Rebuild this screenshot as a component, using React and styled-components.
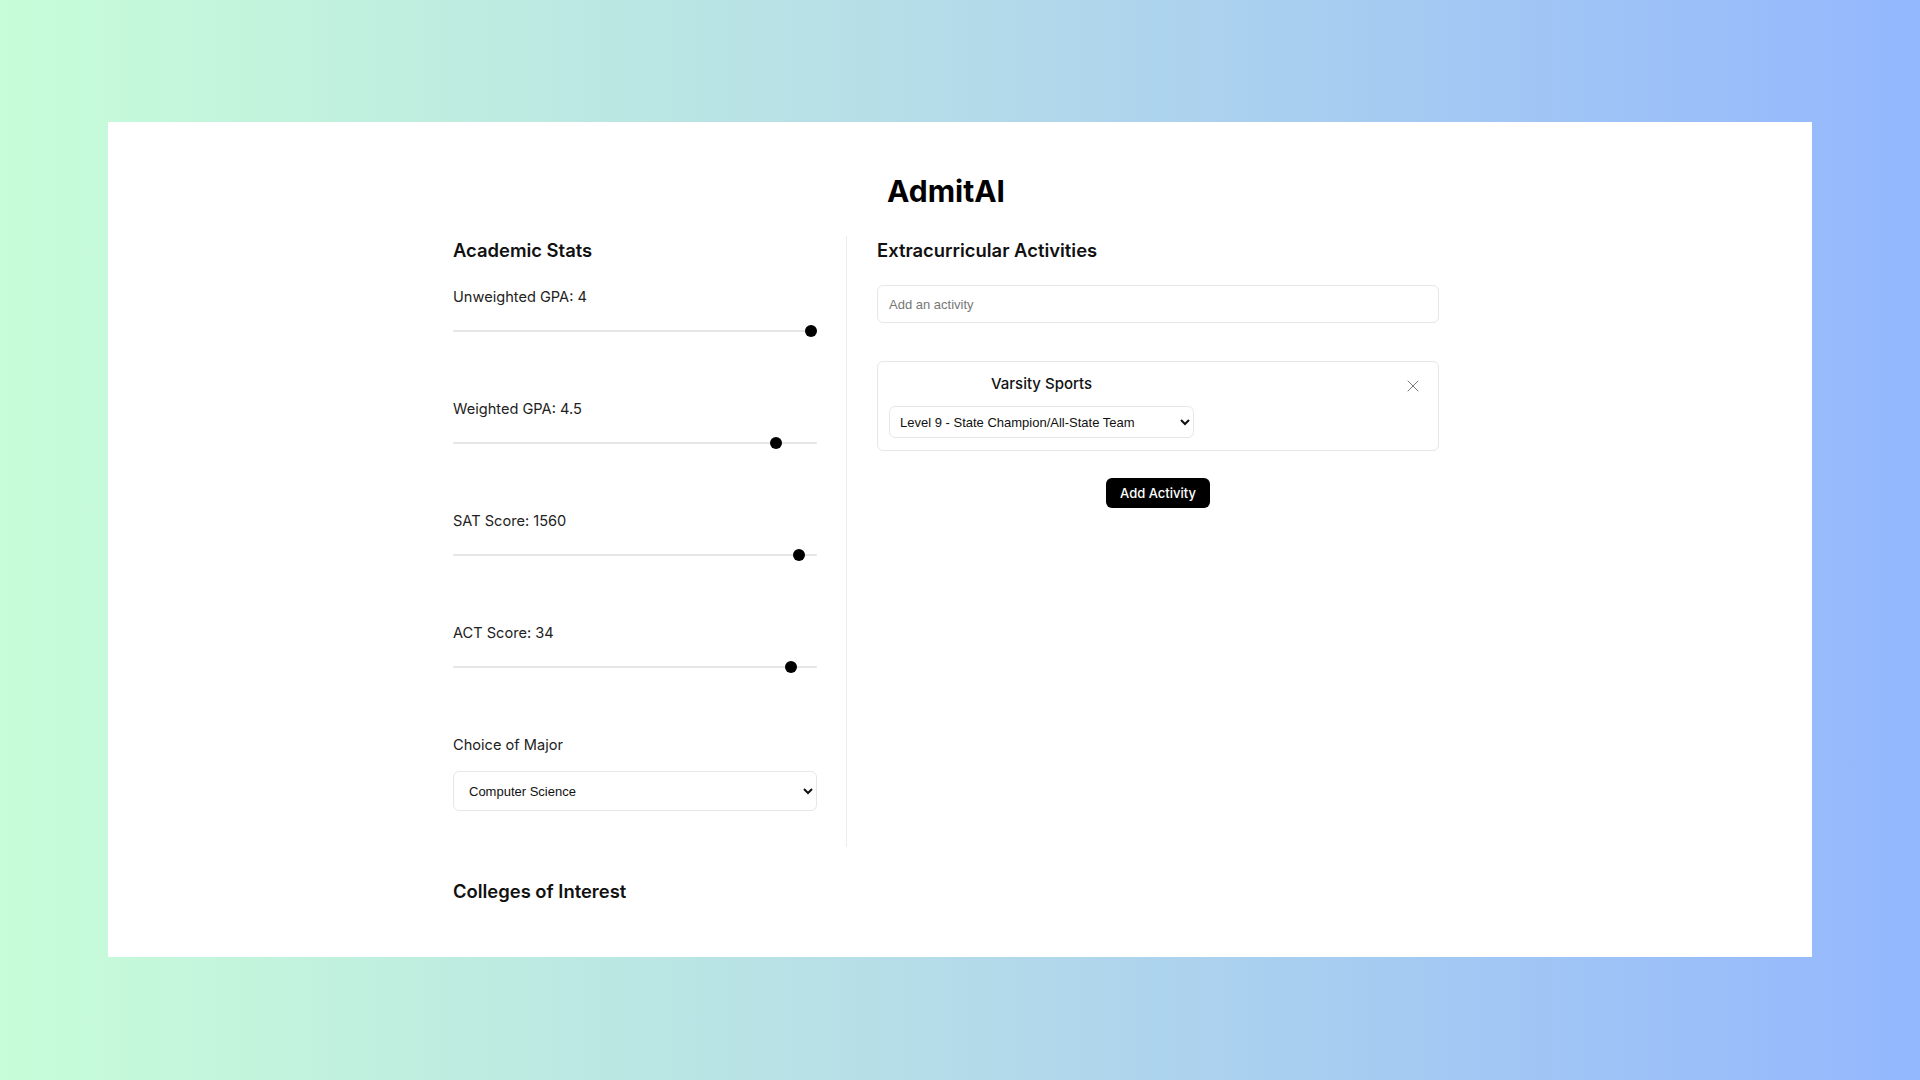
import { useState } from 'react'
import styled, { createGlobalStyle } from 'styled-components'
import { X } from 'lucide-react'

const GlobalStyle = createGlobalStyle`
  html, body {
    margin: 0;
    padding: 0;
  }
  body {
    font-family: Inter, "Noto Sans", sans-serif;
    color: #111;
  }
  * {
    box-sizing: border-box;
  }
`

const Page = styled.div`
  min-height: 100vh;
  padding: 122px 108px 123px;
  display: flex;
  background: linear-gradient(to right, #c7fdd8, #b4dbe9 50%, #93b7fd);
`

const Card = styled.main`
  flex: 1;
  background: #fff;
  padding: 49px 28px 0 0;
  display: flex;
  flex-direction: column;
  align-items: center;
`

const Inner = styled.div`
  width: 986px;
  display: flex;
  flex-direction: column;
`

const Title = styled.h1`
  margin: 0;
  font-size: 30px;
  line-height: 40px;
  font-weight: 700;
  text-align: center;
  color: #000;
`

const Columns = styled.div`
  display: flex;
  margin-top: 25px;
`

const LeftCol = styled.section`
  width: 394px;
  padding: 0 29px 36px 0;
  border-right: 1px solid #ededed;
`

const RightCol = styled.section`
  flex: 1;
  padding-left: 30px;
  display: flex;
  flex-direction: column;
`

const Heading = styled.h2`
  margin: 0 0 ${p => p.$gap || 0}px;
  padding-top: 1px;
  font-size: 18.4px;
  line-height: 27px;
  font-weight: 600;
  color: #111;
`

const Field = styled.div`
  margin-bottom: ${p => p.$last ? 0 : 59}px;
`

const Label = styled.label`
  display: block;
  font-size: 14.6px;
  line-height: 20px;
  padding-top: 1px;
  color: #222;
  margin-bottom: 16px;
`

const Range = styled.input`
  display: block;
  width: 100%;
  height: 16px;
  margin: 0;
  background: transparent;
  -webkit-appearance: none;
  appearance: none;

  &::-webkit-slider-runnable-track {
    height: 2px;
    background: #e6e6e6;
    border-radius: 1px;
  }
  &::-webkit-slider-thumb {
    -webkit-appearance: none;
    width: 12px;
    height: 12px;
    margin-top: -5px;
    border-radius: 50%;
    background: #000;
    border: none;
  }
`

const Select = styled.select`
  display: block;
  width: ${p => p.$width || '100%'};
  height: ${p => p.$height || 40}px;
  padding: 0 8px 0 ${p => p.$padLeft ?? 11}px;
  font-family: "Liberation Sans", Arial, sans-serif;
  font-size: 13px;
  color: #111;
  background: #fff;
  border: 1px solid #e7e7e7;
  border-radius: 6px;
`

const TextInput = styled.input`
  height: 38px;
  padding: 0 11px;
  font-family: "Liberation Sans", Arial, sans-serif;
  font-size: 13px;
  border: 1px solid #e7e7e7;
  border-radius: 6px;
  margin: 21px 0 38px;

  &::placeholder {
    color: #777;
  }
`

const ActivityCard = styled.div`
  display: flex;
  justify-content: space-between;
  align-items: flex-start;
  padding: 12px 13px 12px 11px;
  border: 1px solid #e7e7e7;
  border-radius: 6px;
`

const ActivityMain = styled.div`
  display: flex;
  flex-direction: column;
  align-items: center;
  gap: 12px;
`

const ActivityName = styled.div`
  font-size: 15px;
  line-height: 20px;
  font-weight: 500;
  color: #111;
`

const CloseBtn = styled.button`
  display: flex;
  align-items: center;
  justify-content: center;
  width: 24px;
  height: 24px;
  padding: 0;
  border: none;
  background: none;
  color: #7a7a7a;
  cursor: pointer;
`

const AddButton = styled.button`
  align-self: center;
  margin-top: 27px;
  height: 30px;
  padding: 0 14px;
  font-family: Inter, sans-serif;
  font-size: 13px;
  font-weight: 500;
  color: #fff;
  background: #000;
  border: none;
  border-radius: 6px;
  cursor: pointer;
`

const Colleges = styled.section`
  margin-top: 30px;
`

const sliders = [
  { key: 'ugpa', label: 'Unweighted GPA', min: 0, max: 4, step: 0.1, value: 4 },
  { key: 'wgpa', label: 'Weighted GPA', min: 0, max: 5, step: 0.1, value: 4.5 },
  { key: 'sat', label: 'SAT Score', min: 400, max: 1600, step: 10, value: 1560 },
  { key: 'act', label: 'ACT Score', min: 1, max: 36, step: 1, value: 34 },
]

const majors = ['Computer Science', 'Engineering', 'Biology', 'Economics', 'Mathematics']

const levels = [
  'Level 10 - National/International Recognition',
  'Level 9 - State Champion/All-State Team',
  'Level 8 - Regional Recognition',
  'Level 7 - Team Captain',
]

export default function App() {
  const [stats, setStats] = useState(
    Object.fromEntries(sliders.map(s => [s.key, s.value]))
  )
  const [major, setMajor] = useState('Computer Science')
  const [activity, setActivity] = useState('')
  const [level, setLevel] = useState(levels[1])

  return (
    <>
      <GlobalStyle />
      <Page>
        <Card>
          <Inner>
            <Title>AdmitAI</Title>
            <Columns>
              <LeftCol>
                <Heading $gap={22}>Academic Stats</Heading>
                {sliders.map(s => (
                  <Field key={s.key}>
                    <Label>{s.label}: {stats[s.key]}</Label>
                    <Range
                      type="range"
                      min={s.min}
                      max={s.max}
                      step={s.step}
                      value={stats[s.key]}
                      onChange={e => setStats({ ...stats, [s.key]: Number(e.target.value) })}
                    />
                  </Field>
                ))}
                <Field $last>
                  <Label>Choice of Major</Label>
                  <Select value={major} onChange={e => setMajor(e.target.value)}>
                    {majors.map(m => <option key={m}>{m}</option>)}
                  </Select>
                </Field>
              </LeftCol>
              <RightCol>
                <Heading>Extracurricular Activities</Heading>
                <TextInput
                  placeholder="Add an activity"
                  value={activity}
                  onChange={e => setActivity(e.target.value)}
                />
                <ActivityCard>
                  <ActivityMain>
                    <ActivityName>Varsity Sports</ActivityName>
                    <Select
                      $width="305px"
                      $height={32}
                      $padLeft={6}
                      value={level}
                      onChange={e => setLevel(e.target.value)}
                    >
                      {levels.map(l => <option key={l}>{l}</option>)}
                    </Select>
                  </ActivityMain>
                  <CloseBtn aria-label="Remove">
                    <X size={20} strokeWidth={1.2} />
                  </CloseBtn>
                </ActivityCard>
                <AddButton>Add Activity</AddButton>
              </RightCol>
            </Columns>
            <Colleges>
              <Heading>Colleges of Interest</Heading>
            </Colleges>
          </Inner>
        </Card>
      </Page>
    </>
  )
}
